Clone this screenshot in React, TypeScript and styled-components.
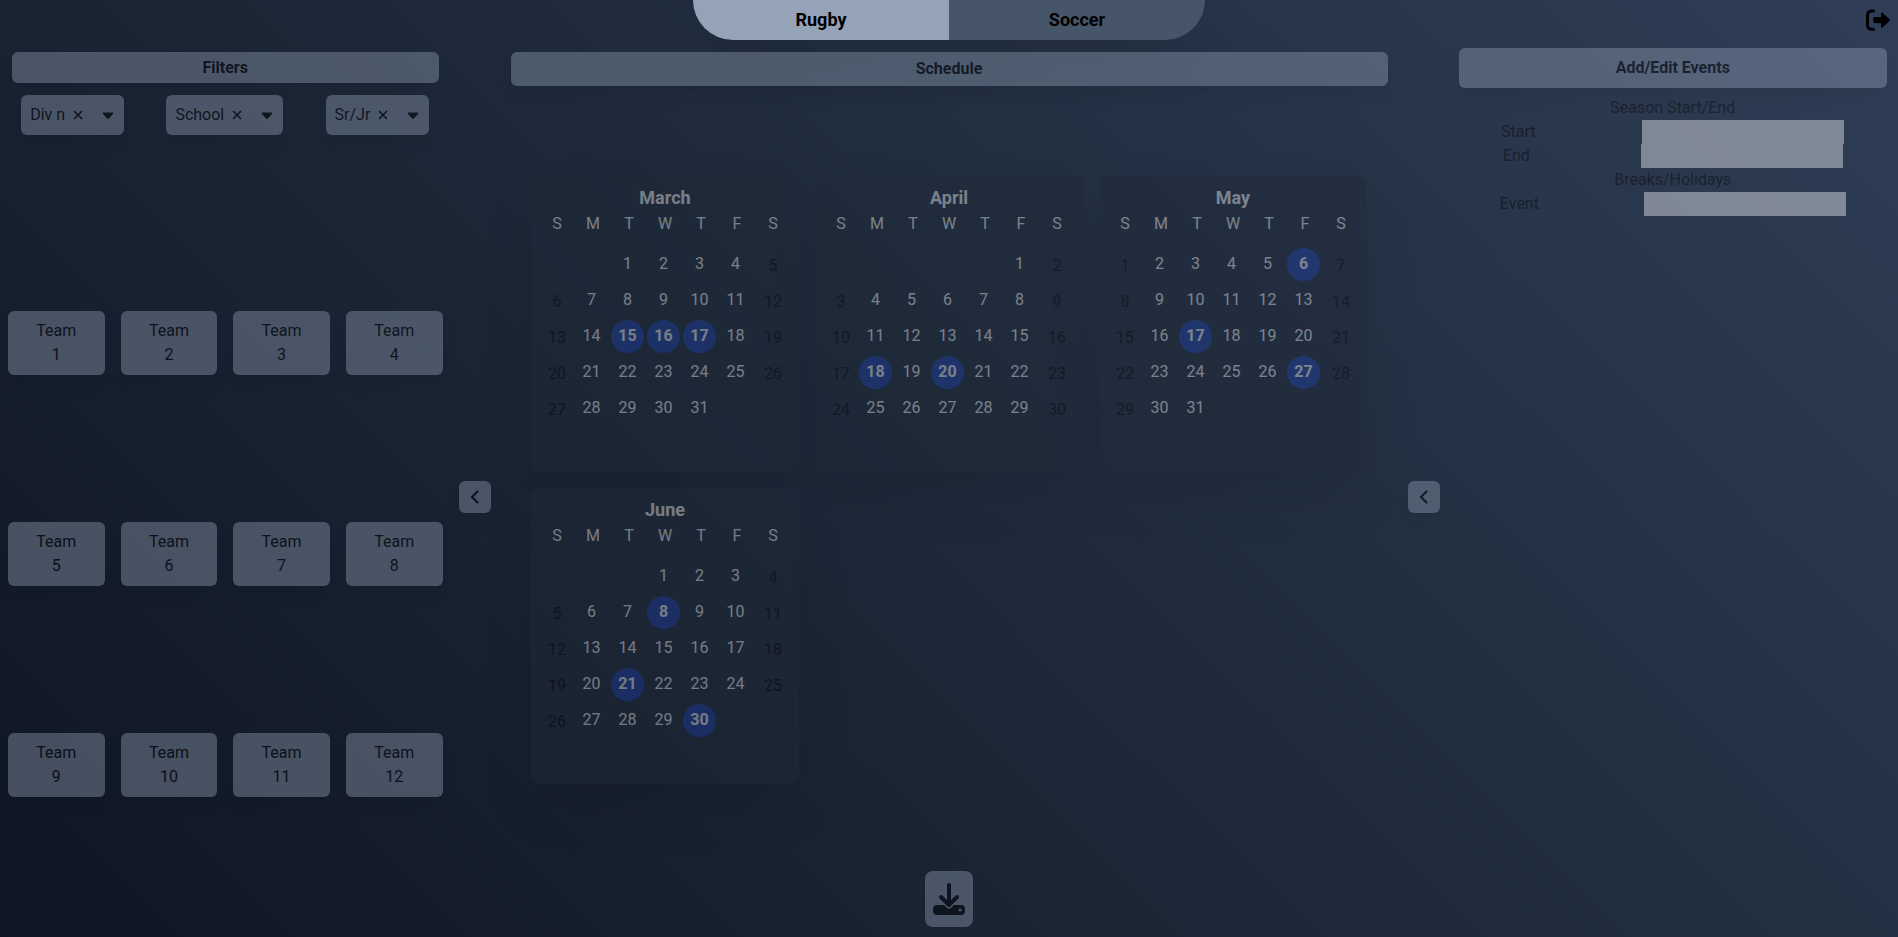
import React, { useState } from "react";
import styled, { createGlobalStyle } from "styled-components";

const GlobalStyle = createGlobalStyle`
  *, *::before, *::after { box-sizing: border-box; }
  body {
    margin: 0;
    font-family: Roboto, "Liberation Sans", sans-serif;
    font-size: 16px;
    line-height: 24px;
    color: #000;
  }
  button, input { font: inherit; color: inherit; border: 0; padding: 0; margin: 0; }
  button { cursor: pointer; }
  h2, h3, p { margin: 0; font-size: 16px; font-weight: 400; }
`;

const Page = styled.div`
  display: flex;
  flex-direction: column;
  min-height: 100vh;
  padding-bottom: 6px;
  background: linear-gradient(45deg, #0f1522, #1e2a3a 50%, #2f3e56);
`;

const Header = styled.header`
  display: grid;
  grid-template-columns: 1fr auto 1fr;
  height: 40px;
`;

const Tabs = styled.nav`
  grid-column: 2;
  display: flex;
  border-radius: 0 0 40px 40px;
  overflow: hidden;
  box-shadow: 0 25px 50px -12px rgba(0, 0, 0, 0.25);
`;

const Tab = styled.button<{ $active: boolean }>`
  width: 256px;
  font-size: 18px;
  font-weight: 700;
  background: ${(p) => (p.$active ? "#94a3b8" : "#475569")};
`;

const SignOut = styled.button`
  justify-self: end;
  align-self: center;
  display: flex;
  margin-right: 8px;
  background: none;
`;

const Main = styled.main`
  flex: 1;
  display: grid;
  grid-template-columns: minmax(0, 1fr) 48px minmax(0, 2fr) 48px minmax(0, 1fr);
  opacity: 0.4;
`;

const Column = styled.section`
  display: flex;
  flex-direction: column;
`;

const panelSurface = `
  background: #94a3b8;
  border-radius: 6px;
  box-shadow: 0 10px 15px -3px rgba(0, 0, 0, 0.1), 0 4px 6px -4px rgba(0, 0, 0, 0.1);
`;

const Title = styled.h2<{ $size: "small" | "medium" | "large" }>`
  ${panelSurface}
  margin: ${(p) => (p.$size === "large" ? "8px 11px" : "12px")};
  line-height: ${(p) => ({ small: 31, medium: 34, large: 40 })[p.$size]}px;
  font-weight: 700;
  text-align: center;
`;

const Filters = styled.div`
  min-height: 197px;
`;

const FilterRow = styled.div`
  display: flex;
  justify-content: space-around;
`;

const FilterBox = styled.div`
  ${panelSurface}
  display: flex;
  align-items: center;
  height: 40px;
  padding: 0 10px 0 9px;
`;

const FilterIcon = styled.button<{ $gap: number }>`
  display: flex;
  margin-left: ${(p) => p.$gap}px;
  background: none;
`;

const TeamGrid = styled.div`
  flex: 1;
  display: grid;
  grid-template-columns: repeat(4, minmax(0, 1fr));
  grid-auto-rows: 1fr;
  align-items: center;
`;

const TeamCard = styled.button`
  ${panelSurface}
  display: flex;
  flex-direction: column;
  align-items: center;
  margin: 0 8px;
  padding: 8px;
`;

const Rail = styled.div`
  display: flex;
  align-items: center;
  justify-content: center;
  padding-top: 83px;
`;

const RailButton = styled.button`
  ${panelSurface}
  display: flex;
  align-items: center;
  justify-content: center;
  width: 32px;
  height: 32px;
`;

const Calendars = styled.div`
  flex: 1;
  display: grid;
  grid-template-columns: repeat(auto-fit, 268px);
  gap: 16px;
  justify-content: center;
  align-content: center;
  padding: 0 8px 10px;
`;

const Month = styled.div`
  padding: 8px;
  color: #fff;
  background: #1f2937;
  border-radius: 8px;
  box-shadow: 0 25px 50px -12px rgba(0, 0, 0, 0.25);
`;

const MonthTable = styled.table`
  border-collapse: collapse;
  table-layout: fixed;
  width: 100%;

  caption {
    font-size: 18px;
    line-height: 28px;
    font-weight: 700;
  }
  th {
    height: 36px;
    padding: 0 0 12px;
    font-weight: 400;
  }
  td {
    height: 36px;
    padding: 0;
    text-align: center;
  }
`;

const Weekend = styled.span`
  color: #000;
`;

const Day = styled.button<{ $marked: boolean }>`
  display: block;
  width: 33px;
  height: 33px;
  margin-bottom: 3px;
  color: #fff;
  border-radius: 50%;
  font-weight: ${(p) => (p.$marked ? 700 : 400)};
  background: ${(p) => (p.$marked ? "#1e40af" : "none")};
`;

const EventForm = styled.form`
  text-align: center;
`;

const Field = styled.label`
  display: flex;
  justify-content: space-around;
`;

const FieldInput = styled.input`
  width: 202px;
  height: 24px;
  background: #fff;
`;

const Footer = styled.footer`
  display: flex;
  justify-content: center;
  padding-bottom: 4px;
  opacity: 0.4;
`;

const Download = styled.button`
  display: flex;
  align-items: center;
  justify-content: center;
  width: 48px;
  height: 56px;
  background: #94a3b8;
  border-radius: 8px;
`;

const months = [
  { name: "March", start: 2, days: 31, marked: [15, 16, 17] },
  { name: "April", start: 5, days: 30, marked: [18, 20] },
  { name: "May", start: 0, days: 31, marked: [6, 17, 27] },
  { name: "June", start: 3, days: 30, marked: [8, 21, 30] },
];

const weekdays = ["S", "M", "T", "W", "T", "F", "S"];
const filters = ["Div n", "School", "Sr/Jr"];
const teams = Array.from({ length: 12 }, (_, i) => i + 1);
const weeks = [0, 1, 2, 3, 4, 5];

function MonthCard({ name, start, days, marked }: (typeof months)[number]) {
  return (
    <Month>
      <MonthTable>
        <caption>{name}</caption>
        <thead>
          <tr>
            {weekdays.map((d, i) => (
              <th key={i} scope="col">{d}</th>
            ))}
          </tr>
        </thead>
        <tbody>
          {weeks.map((week) => (
            <tr key={week}>
              {weekdays.map((_, i) => {
                const day = week * 7 + i - start + 1;
                if (day < 1 || day > days) return <td key={i} />;
                return (
                  <td key={i}>
                    {i === 0 || i === 6 ? (
                      <Weekend>{day}</Weekend>
                    ) : (
                      <Day type="button" $marked={marked.includes(day)}>{day}</Day>
                    )}
                  </td>
                );
              })}
            </tr>
          ))}
        </tbody>
      </MonthTable>
    </Month>
  );
}

function Filter({ label }: { label: string }) {
  return (
    <FilterBox>
      <span>{label}</span>
      <FilterIcon type="button" aria-label={`Clear ${label}`} $gap={7}>
        <svg width="12" height="12" viewBox="0 0 12 12" stroke="currentColor" strokeWidth="1.700">
          <path d="M2 2l8 8M10 2l-8 8" />
        </svg>
      </FilterIcon>
      <FilterIcon type="button" aria-label={`Open ${label}`} $gap={18}>
        <svg width="12" height="12" viewBox="0 0 12 12" fill="currentColor">
          <path d="M1.500 3.500h9c.8 0 1 .9.500 1.400L7.200 9.200c-.7.700-1.700.7-2.400 0L1 4.900c-.5-.5-.3-1.400.5-1.400z" />
        </svg>
      </FilterIcon>
    </FilterBox>
  );
}

function SignOutIcon() {
  return (
    <svg width="24" height="24" viewBox="0 0 24 24" aria-hidden="true">
      <path
        d="M7.500 2.900H5.500a4 4 0 0 0-4 4v10.400a4 4 0 0 0 4 4h2"
        fill="none"
        stroke="currentColor"
        strokeWidth="3"
        strokeLinecap="round"
      />
      <path
        d="M9 9h6V5.500c0-.9.900-1.300 1.500-.7l7.200 6.600c.4.400.4 1 0 1.400l-7.200 6.700c-.6.600-1.500.2-1.500-.7V15.200H9c-1 0-1.700-.7-1.700-1.700v-2.800C7.300 9.700 8 9 9 9z"
        fill="currentColor"
      />
    </svg>
  );
}

function ChevronIcon() {
  return (
    <svg width="16" height="16" viewBox="0 0 16 16" fill="none" aria-hidden="true">
      <path d="M10.500 2.500L5 8l5.500 5.500" stroke="currentColor" strokeWidth="2.200" strokeLinecap="round" />
    </svg>
  );
}

function DownloadIcon() {
  return (
    <svg width="32" height="32" viewBox="0 0 32 32" fill="none" aria-hidden="true">
      <rect y="22" width="32" height="10" rx="4" fill="currentColor" />
      <path d="M8 14l8 8 8-8" stroke="#94a3b8" strokeWidth="7" strokeLinecap="round" strokeLinejoin="round" />
      <circle cx="27" cy="27" r="1.500" fill="#94a3b8" />
      <path d="M16 2v20M8 14l8 8 8-8" stroke="currentColor" strokeWidth="4" strokeLinecap="round" strokeLinejoin="round" />
    </svg>
  );
}

export default function App() {
  const [sport, setSport] = useState("Rugby");
  return (
    <Page>
      <GlobalStyle />
      <Header>
        <Tabs>
          {["Rugby", "Soccer"].map((s) => (
            <Tab key={s} type="button" $active={s === sport} onClick={() => setSport(s)}>{s}</Tab>
          ))}
        </Tabs>
        <SignOut type="button" aria-label="Sign out"><SignOutIcon /></SignOut>
      </Header>
      <Main>
        <Column>
          <Filters>
            <Title $size="small">Filters</Title>
            <FilterRow>
              {filters.map((f) => <Filter key={f} label={f} />)}
            </FilterRow>
          </Filters>
          <TeamGrid>
            {teams.map((n) => (
              <TeamCard key={n} type="button">
                <span>Team</span>
                <span>{n}</span>
              </TeamCard>
            ))}
          </TeamGrid>
        </Column>
        <Rail>
          <RailButton type="button" aria-label="Collapse filters"><ChevronIcon /></RailButton>
        </Rail>
        <Column>
          <Title $size="medium">Schedule</Title>
          <Calendars>
            {months.map((m) => <MonthCard key={m.name} {...m} />)}
          </Calendars>
        </Column>
        <Rail>
          <RailButton type="button" aria-label="Collapse events"><ChevronIcon /></RailButton>
        </Rail>
        <Column>
          <Title $size="large">Add/Edit Events</Title>
          <EventForm>
            <h3>Season Start/End</h3>
            <Field>Start<FieldInput type="text" /></Field>
            <Field>End<FieldInput type="text" /></Field>
            <h3>Breaks/Holidays</h3>
            <Field>Event<FieldInput type="text" /></Field>
          </EventForm>
        </Column>
      </Main>
      <Footer>
        <Download type="button" aria-label="Download"><DownloadIcon /></Download>
      </Footer>
    </Page>
  );
}
